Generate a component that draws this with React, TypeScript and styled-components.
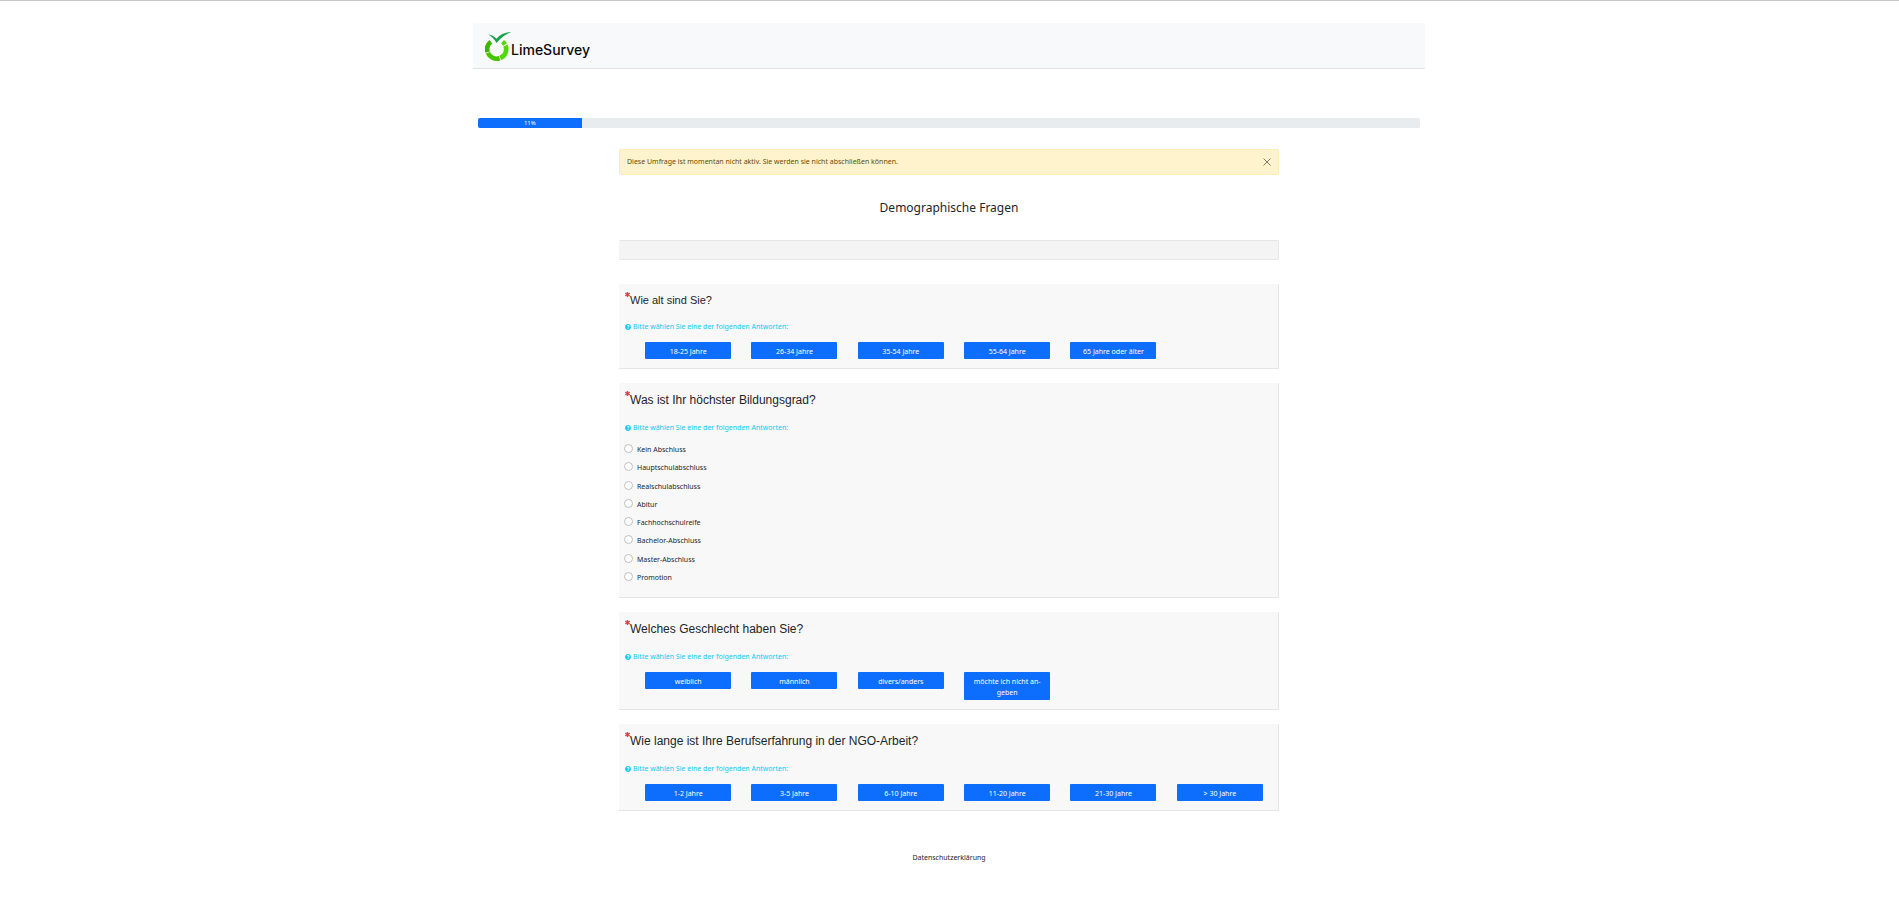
import React from "react";
import styled, { createGlobalStyle } from "styled-components";
import { FaAsterisk, FaQuestionCircle } from "react-icons/fa";

const GlobalStyle = createGlobalStyle`
  *, *::before, *::after { box-sizing: border-box; }
  body {
    margin: 0;
    background: #fff;
    color: #212529;
    font-family: "Noto Sans", "Open Sans", sans-serif;
    font-size: 7px;
    line-height: 10px;
  }
`;

const Page = styled.div`
  border-top: 1px solid #c6c6c6;
  padding: 22px 1px 0 0;
`;

const Container = styled.div`
  max-width: 952px;
  margin: 0 auto;
`;

const Header = styled.header`
  display: flex;
  align-items: flex-start;
  height: 46px;
  padding: 9px 12px 0;
  background: #f8f9fa;
  border-bottom: 1px solid #dee2e6;
`;

const Brand = styled.a`
  display: flex;
  align-items: flex-end;
  color: #0a0a0a;
  font-family: Inter, sans-serif;
  font-size: 14px;
  font-weight: 500;
  line-height: 24px;
  text-decoration: none;
`;

const LogoMark = styled.svg`
  width: 26px;
  height: 30px;
`;

const ProgressTrack = styled.div`
  display: flex;
  height: 10px;
  margin: 49px 5px 21px;
  background: #e9ecef;
  border-radius: 2px;
  overflow: hidden;
`;

const ProgressBar = styled.div<{ $value: number }>`
  width: ${(p) => p.$value}%;
  background: #0d6efd;
  color: #fff;
  font-size: 6px;
  text-align: center;
`;

const Main = styled.main`
  max-width: 660px;
  margin: 0 auto;
`;

const Alert = styled.div`
  display: flex;
  align-items: center;
  justify-content: space-between;
  height: 26px;
  padding: 0 7px;
  background: #fff3cd;
  border: 1px solid #ffecb5;
  border-radius: 2px;
  color: #664d03;
`;

const CloseButton = styled.button`
  display: flex;
  padding: 0;
  border: 0;
  background: none;
  color: #807a67;
`;

const GroupTitle = styled.h1`
  margin: 23px 0 22px;
  font-size: 12px;
  font-weight: 400;
  line-height: 20px;
  text-align: center;
`;

const GroupDescription = styled.div`
  height: 20px;
  margin-bottom: 24px;
  background: #f4f4f4;
  border: 1px solid #e6e6e6;
  border-left-color: #f3f3f3;
  border-radius: 2px;
`;

const Card = styled.fieldset`
  min-width: 0;
  margin: 0 0 14px;
  padding: 8px 5px 9px;
  background: #f8f8f8;
  border: 0 solid #e6e6e6;
  border-width: 0 1px 1px 0;
`;

const Question = styled.h2<{ $small?: boolean }>`
  display: flex;
  align-items: flex-start;
  margin: 0;
  padding-left: 1px;
  font-family: "Liberation Sans", Arial, sans-serif;
  font-size: ${(p) => (p.$small ? 11 : 12)}px;
  font-weight: 400;
  line-height: ${(p) => (p.$small ? 16 : 18)}px;
  color: #212529;

  svg {
    width: 5px;
    height: 5px;
    color: #dc3545;
    stroke: #dc3545;
    stroke-width: 50px;
  }
`;

const Hint = styled.p`
  display: flex;
  align-items: center;
  gap: 2px;
  margin: 14px 0 8px;
  padding-left: 1px;
  color: #0dcaf0;

  svg {
    width: 6px;
    height: 6px;
  }
`;

const ButtonGrid = styled.div`
  display: grid;
  grid-template-columns: repeat(6, 1fr);
  align-items: start;
  padding: 2px 0 0 11px;
`;

const ChoiceButton = styled.button`
  width: 86px;
  justify-self: center;
  padding: 4px 6px 2px;
  border: 0;
  border-radius: 1px;
  background: #0d6efd;
  color: #fff;
  font: inherit;
  line-height: 11px;
  text-align: center;
`;

const RadioList = styled.div`
  display: grid;
  grid-auto-rows: 1fr;
  height: 146px;
  margin-bottom: 1px;
`;

const RadioRow = styled.label`
  display: flex;
  align-items: center;
  gap: 4px;
`;

const Radio = styled.input`
  appearance: none;
  width: 9px;
  height: 9px;
  margin: 0 0 3px;
  border: 1px solid #bfbfbf;
  border-radius: 50%;
  background: #fff;
`;

const Footer = styled.footer`
  margin-top: 42px;
  text-align: center;

  a {
    color: #212529;
    text-decoration: none;
  }
`;

type Item = {
  id: string;
  text: string;
  small?: boolean;
  kind: "buttons" | "radios";
  answers: string[];
};

const questions: Item[] = [
  {
    id: "age",
    text: "Wie alt sind Sie?",
    small: true,
    kind: "buttons",
    answers: ["18-25 Jahre", "26-34 Jahre", "35-54 Jahre", "55-64 Jahre", "65 Jahre oder älter"],
  },
  {
    id: "education",
    text: "Was ist Ihr höchster Bildungsgrad?",
    kind: "radios",
    answers: [
      "Kein Abschluss",
      "Hauptschulabschluss",
      "Realschulabschluss",
      "Abitur",
      "Fachhochschulreife",
      "Bachelor-Abschluss",
      "Master-Abschluss",
      "Promotion",
    ],
  },
  {
    id: "gender",
    text: "Welches Geschlecht haben Sie?",
    kind: "buttons",
    answers: ["weiblich", "männlich", "divers/anders", "möchte ich nicht an\u00adgeben"],
  },
  {
    id: "experience",
    text: "Wie lange ist Ihre Berufserfahrung in der NGO-Arbeit?",
    kind: "buttons",
    answers: ["1-2 Jahre", "3-5 Jahre", "6-10 Jahre", "11-20 Jahre", "21-30 Jahre", "> 30 Jahre"],
  },
];

function Logo() {
  return (
    <LogoMark viewBox="0 0 26 30" aria-hidden="true">
      <g fill="none" strokeWidth="4.6">
        <path d="M5.850 9.700A9.500 9.500 0 0 0 2.670 20.100" stroke="#3db500" />
        <path d="M2.900 20.900A9.500 9.500 0 0 0 14.600 26.200" stroke="#46c400" />
        <path d="M15.300 26A9.500 9.500 0 0 0 20.500 13.500" stroke="#50d800" />
        <path d="M20 12.500A9.500 9.500 0 0 0 17.550 9.700" stroke="#50d800" />
      </g>
      <path d="M3.500 2.500C7 3 9.500 4.500 11.500 6.700C15 2.500 20 .1 26 0C20 2.500 15.500 6 11.600 11C9.500 7.500 7 4.500 3.500 2.500z" fill="#16a34a" />
    </LogoMark>
  );
}

function QuestionCard({ item }: { item: Item }) {
  return (
    <Card aria-labelledby={item.id}>
      <Question id={item.id} $small={item.small}>
        <FaAsterisk />
        {item.text}
      </Question>
      <Hint>
        <FaQuestionCircle />
        Bitte wählen Sie eine der folgenden Antworten:
      </Hint>
      {item.kind === "buttons" ? (
        <ButtonGrid>
          {item.answers.map((a) => (
            <ChoiceButton type="button" key={a}>{a}</ChoiceButton>
          ))}
        </ButtonGrid>
      ) : (
        <RadioList>
          {item.answers.map((a) => (
            <RadioRow key={a}>
              <Radio type="radio" name={item.id} />
              {a}
            </RadioRow>
          ))}
        </RadioList>
      )}
    </Card>
  );
}

export default function App() {
  return (
    <Page>
      <GlobalStyle />
      <Container>
        <Header>
          <Brand href="#"><Logo />LimeSurvey</Brand>
        </Header>
        <ProgressTrack role="progressbar" aria-valuenow={11} aria-valuemin={0} aria-valuemax={100}>
          <ProgressBar $value={11}>11%</ProgressBar>
        </ProgressTrack>
        <Main>
          <Alert role="alert">
            Diese Umfrage ist momentan nicht aktiv. Sie werden sie nicht abschließen können.
            <CloseButton type="button" aria-label="Schließen">
              <svg width="8" height="8" viewBox="0 0 8 8" stroke="currentColor" aria-hidden="true">
                <path d="M.5.5l7 7M7.500.5l-7 7" />
              </svg>
            </CloseButton>
          </Alert>
          <GroupTitle>Demographische Fragen</GroupTitle>
          <GroupDescription />
          {questions.map((q) => (
            <QuestionCard key={q.id} item={q} />
          ))}
        </Main>
        <Footer><a href="#">Datenschutzerklärung</a></Footer>
      </Container>
    </Page>
  );
}
